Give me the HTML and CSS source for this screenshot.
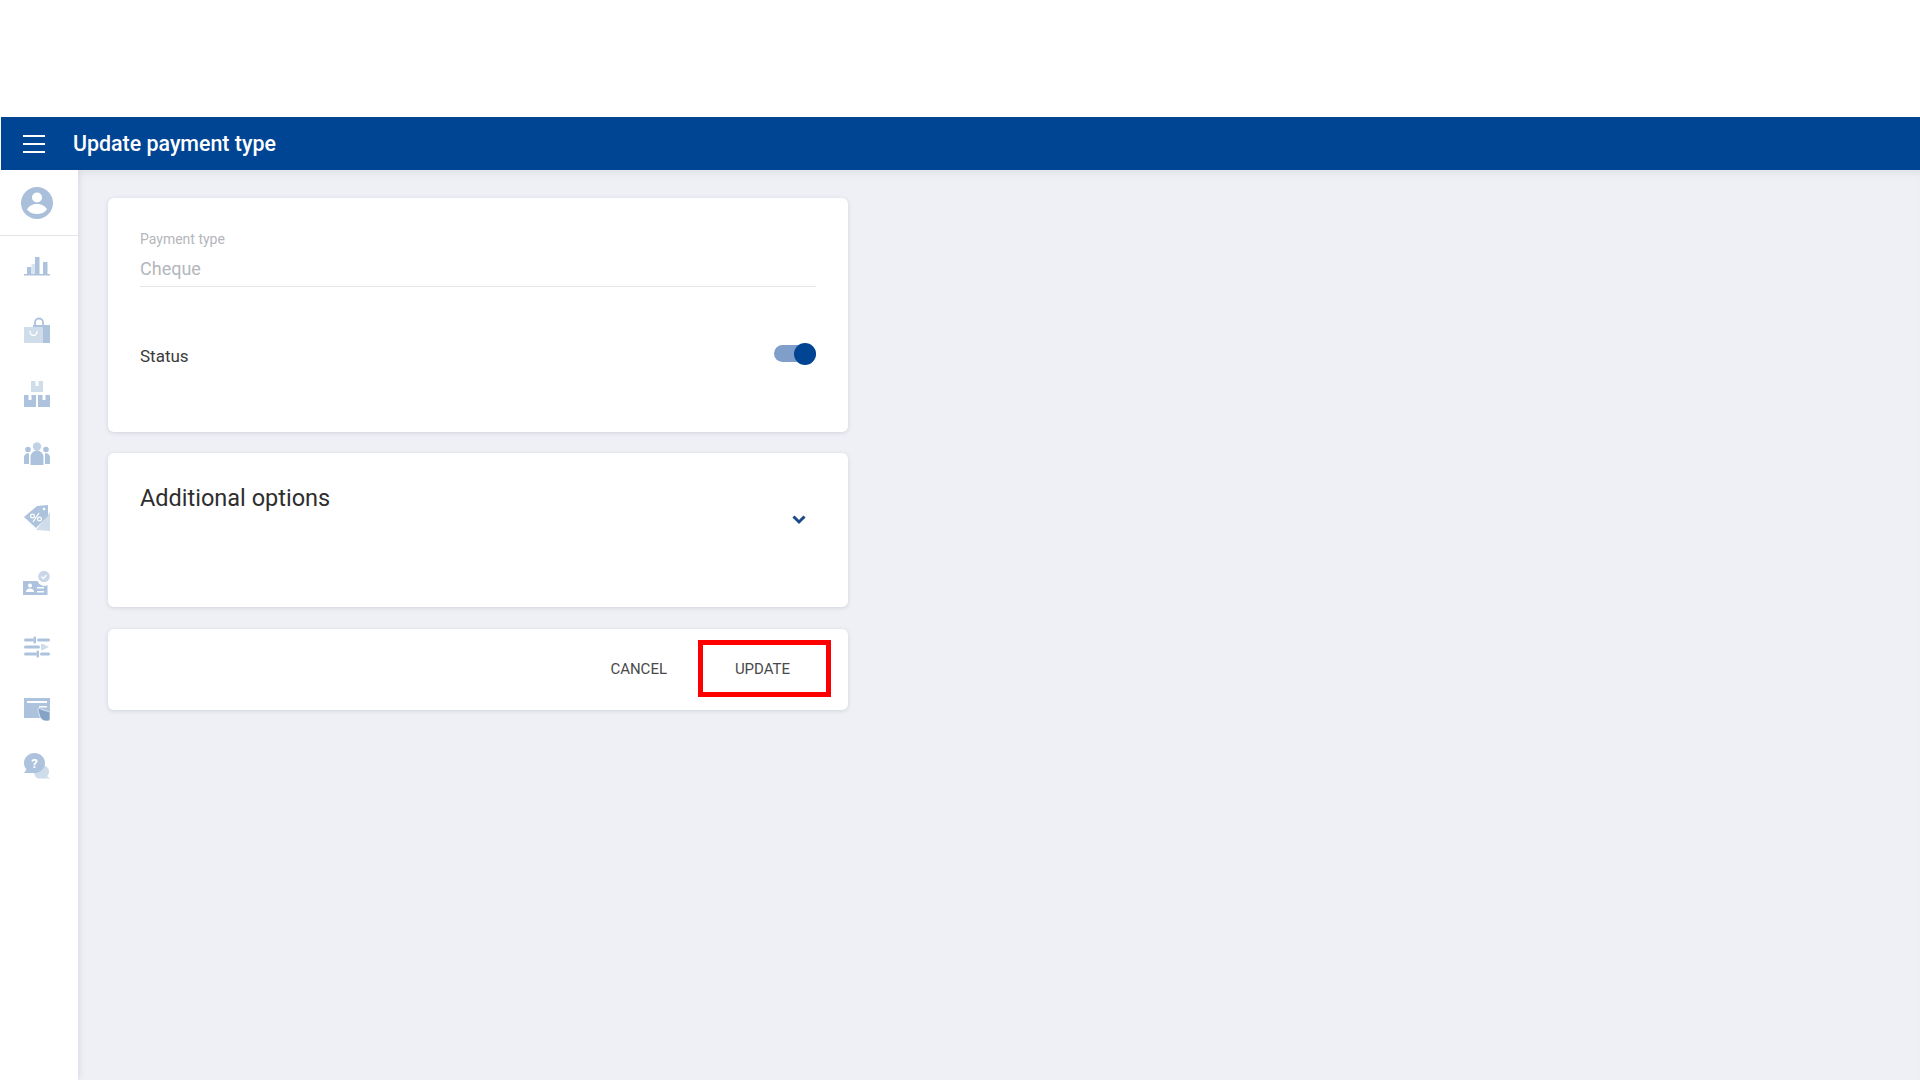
FILE: index.html
```html
<!DOCTYPE html>
<html lang="en">
<head>
<meta charset="utf-8">
<title>Update payment type</title>
<link rel="stylesheet" href="styles.css">
</head>
<body>
<div class="top-space"></div>
<header class="app-bar">
  <svg class="menu-icon" width="22" height="20" viewBox="0 0 22 20"><path d="M0 2h22M0 10h22M0 18h22" stroke="#fff" stroke-width="2" fill="none"/></svg>
  <h1 class="app-title">Update payment type</h1>
</header>
<div class="shell">
  <nav class="sidebar">
    <div class="profile">
      <svg width="34" height="34" viewBox="0 0 34 34"><circle cx="17" cy="17" r="16" fill="#a9bfda"/><circle cx="17" cy="11.500" r="5" fill="#fff"/><path d="M7 23.500c2-4 6-5.500 10-5.500s8 1.500 10 5.500c-2.500 3-6 4.500-10 4.500s-7.500-1.500-10-4.500z" fill="#fff"/></svg>
    </div>
    <div class="nav-list">
      <div class="nav-item r1"><svg width="28" height="28" viewBox="0 0 28 28"><path d="M4 15h4.500v7H4zM12 5h4.500v17H12zM20 10h4.500v12H20z" fill="#adc3dd"/><path d="M8.500 12H12v10H8.500z" fill="#dbe5f0"/><rect x="1" y="22" width="26" height="1.500" fill="#adc3dd"/></svg></div>
      <div class="nav-item r2"><svg width="28" height="28" viewBox="0 0 28 28"><path d="M12 8V5a4 4 0 0 1 8 0v3" fill="none" stroke="#adc3dd" stroke-width="1.800" transform="translate(0 1.500)"/><path d="M10 9h17v18H10z" fill="#adc3dd"/><path d="M1 12a1 1 0 0 1 1-1h17a1 1 0 0 1 1 1v15H2a1 1 0 0 1-1-1z" fill="#cfdcea"/><path d="M7 15c0 6 7 6 7 0" fill="none" stroke="#fff" stroke-width="1.300"/></svg></div>
      <div class="nav-item r3"><svg width="28" height="28" viewBox="0 0 28 28"><path d="M8 1h12v11H8z" fill="#cfdcea"/><path d="M1 15h12v12H1zM15 15h12v12H15z" fill="#adc3dd"/><path d="M12.500 1h3v5h-3zM5.500 15h3v5h-3zM19.500 15h3v5h-3z" fill="#fff"/></svg></div>
      <div class="nav-item r4"><svg width="28" height="28" viewBox="0 0 28 28"><circle cx="14" cy="6.500" r="4.200" fill="#c2d2e5"/><circle cx="5" cy="9.500" r="2.800" fill="#adc3dd"/><circle cx="23" cy="9.500" r="2.800" fill="#adc3dd"/><path d="M1 24v-7a4 4 0 0 1 5-3.500V24zM27 24v-7a4 4 0 0 0-5-3.500V24z" fill="#adc3dd"/><path d="M7.500 25v-8a6.500 6.500 0 0 1 13 0v8z" fill="#adc3dd"/></svg></div>
      <div class="nav-item r5"><svg width="28" height="28" viewBox="0 0 28 28"><path d="M13 26 27 27V8z" fill="#cfdcea"/><path d="M1 13 14 2l11-1v11L13 24z" fill="#adc3dd"/><circle cx="21" cy="5" r="1.300" fill="#fff"/><path d="M10 18 16 9" stroke="#fff" stroke-width="1.300"/><circle cx="9.500" cy="12" r="1.900" fill="none" stroke="#fff" stroke-width="1.200"/><circle cx="16.500" cy="15" r="1.900" fill="none" stroke="#fff" stroke-width="1.200"/></svg></div>
      <div class="nav-item r6"><svg width="28" height="28" viewBox="0 0 28 28"><circle cx="21" cy="6.500" r="5.800" fill="#c8d6e7"/><path d="M18.500 6.500l2 2 3-3.500" stroke="#fff" stroke-width="1.200" fill="none"/><path d="M0 11h14.500a7 7 0 0 0 10 4v10H0z" fill="#adc3dd"/><circle cx="7" cy="15.500" r="2" fill="#fff"/><path d="M3 22c0-2.500 2-3.500 4-3.500s4 1 4 3.500zM14 17h7v1.500h-7zM14 21h7v1.500h-7z" fill="#fff"/></svg></div>
      <div class="nav-item r7"><svg width="28" height="28" viewBox="0 0 28 28"><g fill="#adc3dd"><rect x="1" y="5.500" width="10" height="3" rx="1.500"/><rect x="14" y="5.500" width="13" height="3" rx="1.500"/><rect x="10.500" y="3.500" width="2.500" height="7" rx="1"/><rect x="1" y="12.500" width="16" height="3" rx="1.500"/><rect x="1" y="19.500" width="13" height="3" rx="1.500"/><rect x="17" y="19.500" width="10" height="3" rx="1.500"/><rect x="13.500" y="17.500" width="2.500" height="7" rx="1"/></g><path d="M18 11h2l6 3-6 3h-2z" fill="#cfdcea"/></svg></div>
      <div class="nav-item r8"><svg width="28" height="28" viewBox="0 0 28 28"><path d="M1 3h26v20H1z" fill="#adc3dd"/><path d="M4 6h20v2H4zM16 11h8v1.500h-8z" fill="#fff"/><path d="M15 15c0-2 2-2 3.500-.500L27 17v7c0 2-2 2-4 2-3 0-5-2-6-4z" fill="#85a3c6" stroke="#fff" stroke-width=".6"/></svg></div>
      <div class="nav-item r9"><svg width="28" height="28" viewBox="0 0 28 28"><path d="M15 14a7.500 7 0 0 1 10 2c2 3 1 7-1 8l3 2.500H15a7 7 0 0 1-4-6z" fill="#cfdcea"/><path d="M11.500 1C17.500 1 22 5.500 22 11s-4.500 10-10.500 10H1l2.500-3.500C1.500 15.500 1 13 1 11 1 5.500 5.500 1 11.500 1z" fill="#adc3dd"/><text class="help-mark" x="11.500" y="16" text-anchor="middle">?</text></svg></div>
    </div>
  </nav>
  <main class="content">
    <section class="card card-form">
      <div class="field">
        <label class="field-label">Payment type</label>
        <div class="field-value">Cheque</div>
      </div>
      <div class="status-row">
        <span class="status-label">Status</span>
        <span class="toggle"><span class="toggle-thumb"></span></span>
      </div>
    </section>
    <section class="card card-options">
      <h2 class="options-title">Additional options</h2>
      <svg class="chevron" width="14" height="10" viewBox="0 0 14 10"><path d="M1.500 1.500 7 7l5.500-5.500" fill="none" stroke="#1c4a8c" stroke-width="3"/></svg>
    </section>
    <section class="card card-actions">
      <button class="action action-cancel">CANCEL</button>
      <button class="action action-update">UPDATE</button>
    </section>
  </main>
</div>
</body>
</html>
```
FILE: styles.css
```css
* { box-sizing: border-box; }
html, body { height: 100%; }
body {
  margin: 0;
  height: 1080px;
  overflow: hidden;
  display: flex;
  flex-direction: column;
  background: #fff;
  font-family: Roboto, "Liberation Sans", sans-serif;
  color: #333;
}
.top-space { height: 117px; flex: none; }
.app-bar {
  flex: none;
  height: 53px;
  margin-left: 1px;
  display: flex;
  align-items: center;
  padding-left: 22px;
  background: #004494;
  position: relative;
  z-index: 2;
}
.menu-icon { flex: none; }
.app-title {
  margin: 0 0 0 28px;
  color: #fff;
  font-size: 21.400px;
  font-weight: 500;
}
.shell { flex: 1; display: flex; min-height: 0; }
.sidebar {
  flex: none;
  width: 78px;
  background: #fff;
  box-shadow: 1px 0 6px rgba(60, 70, 110, .12);
  position: relative;
  z-index: 1;
}
.profile {
  height: 66px;
  padding-right: 4px;
  display: flex;
  align-items: flex-start;
  justify-content: center;
  padding-top: 15px;
  border-bottom: 1px solid #e2e4e8;
}
.profile svg { margin-top: 1px; }
.nav-list {
  display: grid;
  padding-top: 1px;
  grid-template-rows: 58px 70px 58px 62px 66px 66px 60px 64px 50px;
}
.nav-item {
  display: flex;
  align-items: center;
  justify-content: center;
  padding-right: 4px;
}
.help-mark { fill: #fff; font: 700 13px Roboto, sans-serif; }
.content {
  flex: 1;
  background: #eef0f5;
  padding: 28px 0 0 30px;
  display: flex;
  flex-direction: column;
  gap: 21px;
  box-shadow: inset 0 8px 8px -6px rgba(60, 70, 90, .10);
}
.card {
  width: 740px;
  flex: none;
  background: #fff;
  border-radius: 6px;
  box-shadow: 0 1px 4px rgba(50, 60, 90, .16);
}
.card-form { height: 234px; padding: 32px 32px 0; }
.field { border-bottom: 1px solid #e6e7ea; height: 57px; }
.field-label {
  display: block;
  font-size: 14px;
  line-height: 18px;
  color: #b4b6bb;
}
.field-value {
  font-size: 18px;
  line-height: 24px;
  margin-top: 9px;
  color: #b4b6bb;
}
.status-row {
  display: flex;
  justify-content: space-between;
  align-items: center;
  margin-top: 57px;
  height: 24px;
}
.status-label { font-size: 17px; color: #3a3a3a; }
.toggle {
  position: relative;
  width: 42px;
  height: 17px;
  margin-top: -5px;
  border-radius: 9px;
  background: #7f9fca;
}
.toggle-thumb {
  position: absolute;
  right: 0;
  top: -2.500px;
  width: 22px;
  height: 22px;
  border-radius: 50%;
  background: #004494;
}
.card-options {
  height: 154px;
  padding: 31px 32px 0;
  position: relative;
}
.options-title {
  margin: 0;
  font-size: 23.500px;
  font-weight: 400;
  line-height: 28px;
  color: #2e2e2e;
}
.chevron { position: absolute; right: 42px; top: 62px; }
.card-actions {
  height: 81px;
  margin-top: 1px;
  display: flex;
  justify-content: flex-end;
  align-items: center;
  padding: 0 17px 2px 0;
  gap: 31px;
}
.action {
  background: none;
  border: 0;
  padding: 0;
  font: 400 15px Roboto, sans-serif;
  color: #4a4a4a;
}
.action-update {
  width: 133px;
  height: 57px;
  border: 5px solid #f00;
  padding-right: 4px;
}
```
